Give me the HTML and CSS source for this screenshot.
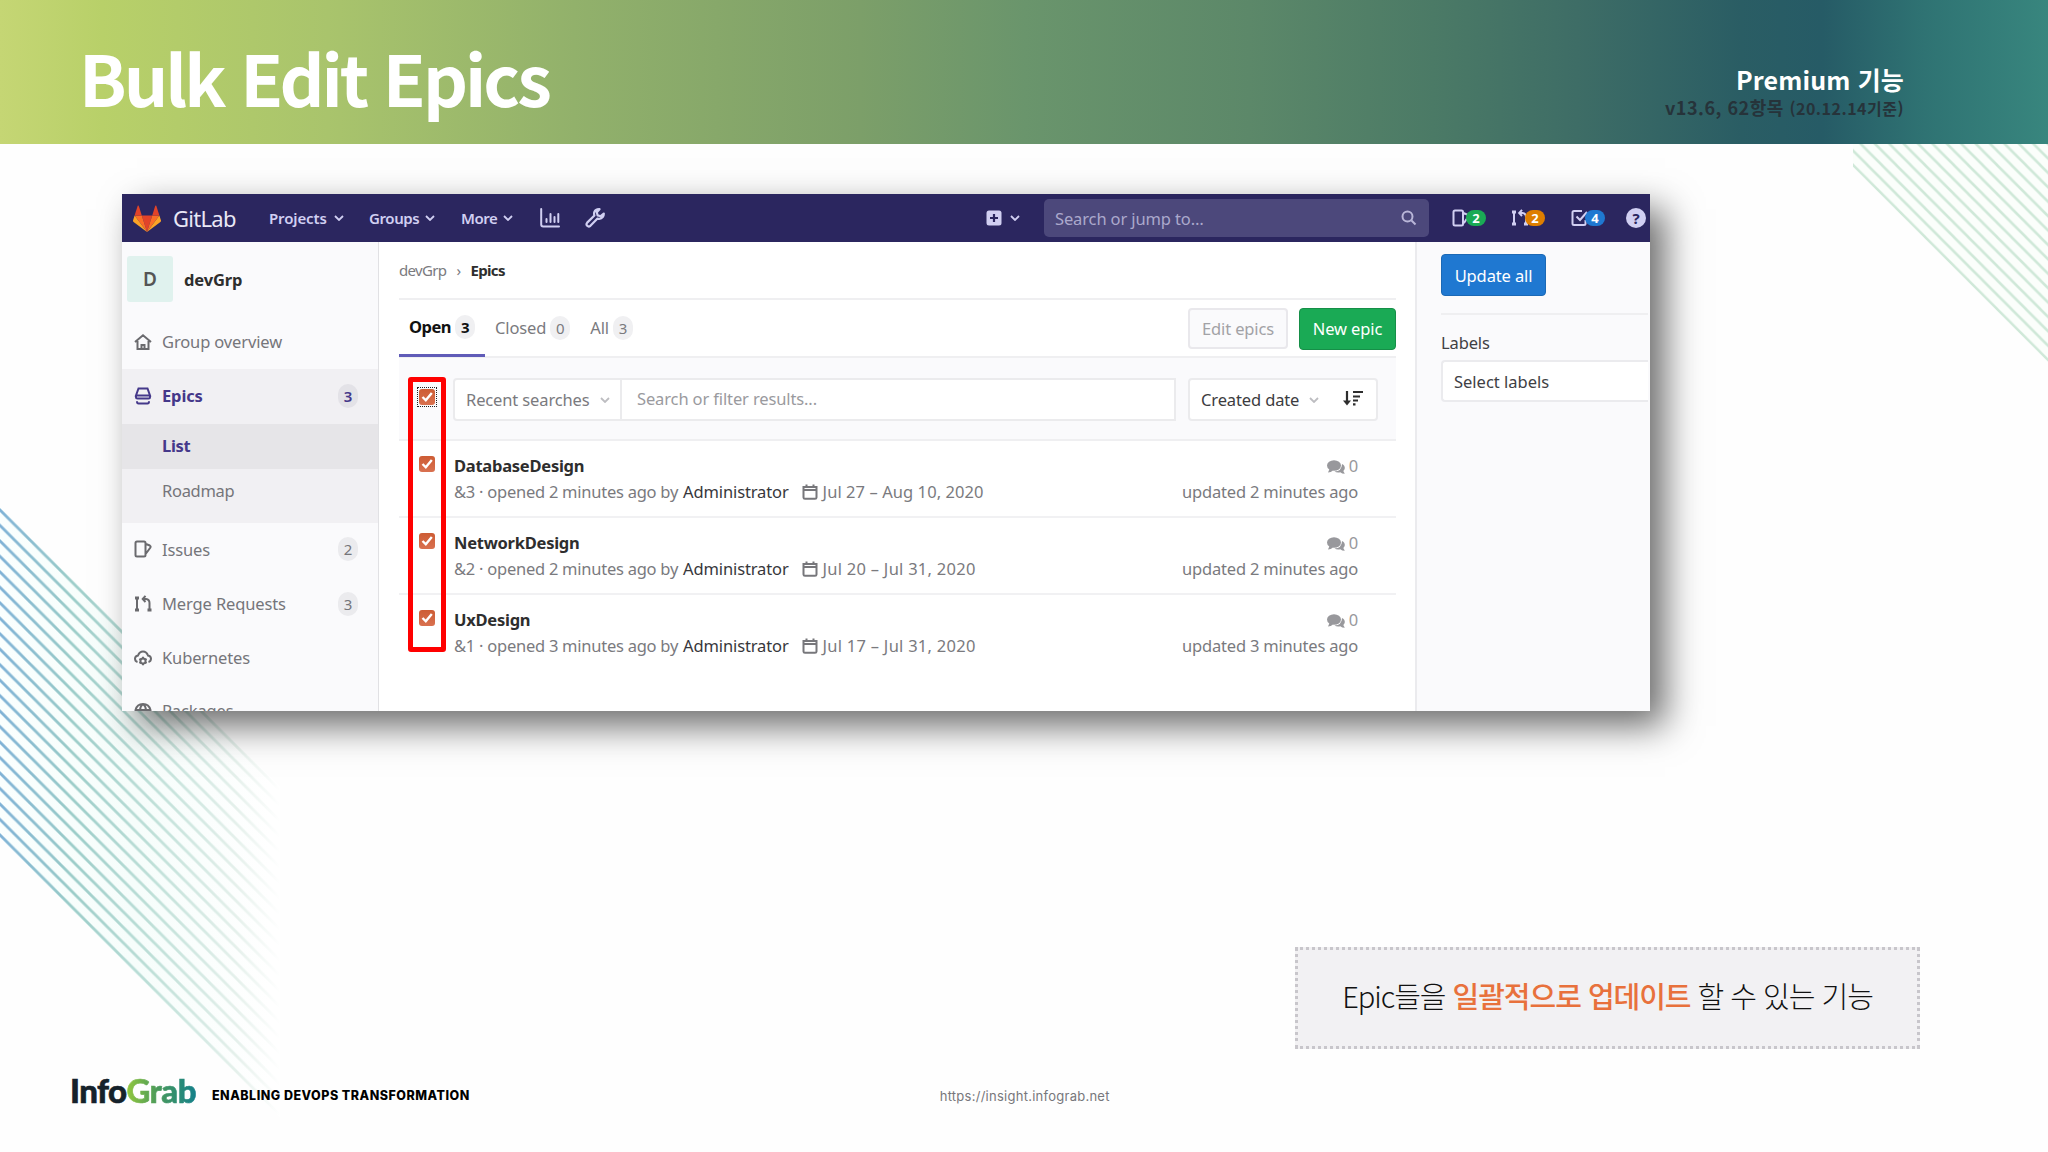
FILE: index.html
```
<!DOCTYPE html>
<html lang="ko">

<head>
  <meta charset="UTF-8" />
  <title>Bulk Edit Epics</title>
  <link rel="stylesheet" href="styles.css">
</head>

<body>
  <div class="slide">
    <!-- decoration lines -->
    <svg class="lines" width="2048" height="1152" viewBox="0 0 2048 1152">
      <defs>
        <linearGradient id="fade" gradientUnits="userSpaceOnUse" x1="0" y1="0" x2="280" y2="0">
          <stop offset="0" stop-color="#7fb2d6" />
          <stop offset="0.25" stop-color="#9accc8" />
          <stop offset="0.55" stop-color="#bfe0d8" />
          <stop offset="0.85" stop-color="#e6f1ec" />
          <stop offset="1" stop-color="#ffffff" />
        </linearGradient>
        <linearGradient id="tint" gradientUnits="userSpaceOnUse" x1="0" y1="0" x2="270" y2="0">
          <stop offset="0" stop-color="#fafffe" />
          <stop offset="0.5" stop-color="#f6fdfb" />
          <stop offset="1" stop-color="#ffffff" />
        </linearGradient>
        <pattern id="leftLines" patternUnits="userSpaceOnUse" width="15.476" height="15.476" patternTransform="translate(0 510)">
          <path d="M-1 -1L16.476 16.476M-1 14.476L1 16.476M14.476 -1L16.476 1" stroke="#fff" stroke-width="2.8" />
        </pattern>
        <mask id="leftMask">
          <path d="M0 507L280 787V1118L0 838Z" fill="url(#leftLines)" />
        </mask>
        <pattern id="rightLines" patternUnits="userSpaceOnUse" width="14.4" height="14.4" patternTransform="translate(1853 165)">
          <path d="M-1 -1L15.4 15.4M-1 13.4L1 15.4M13.4 -1L15.4 1" stroke="#cfe8d8" stroke-width="2.6" />
        </pattern>
      </defs>
      <path d="M0 507L280 787V1118L0 838Z" fill="url(#tint)" />
      <rect x="0" y="500" width="280" height="640" fill="url(#fade)" mask="url(#leftMask)" />
      <path d="M1853 144H2048V362L1853 167Z" fill="#fbfefb" />
      <path d="M1853 144H2048V362L1853 167Z" fill="url(#rightLines)" />
    </svg>

    <header class="header">
      <h1 class="title">Bulk Edit Epics</h1>
      <div class="version">
        <p class="plan">Premium 기능</p>
        <p class="basis">v13.6, 62항목 <small>(20.12.14기준)</small></p>
      </div>
    </header>

    <!-- gitlab window -->
    <div class="window">
      <nav class="nav">
        <svg class="tanuki" viewBox="0 0 28 27" width="28" height="27">
          <path d="M14 27L19.200 10.500H8.800Z" fill="#e24329" />
          <path d="M14 27L8.800 10.500H1.600Z" fill="#fc6d26" />
          <path d="M1.600 10.500L0 15.500Q-.1 16.500 .6 17L14 27Z" fill="#fca326" />
          <path d="M1.600 10.500H8.800L5.700 .8Q5.200 0 4.700 .8Z" fill="#e24329" />
          <path d="M14 27L19.200 10.500H26.400Z" fill="#fc6d26" />
          <path d="M26.400 10.500L28 15.500Q28.100 16.500 27.400 17L14 27Z" fill="#fca326" />
          <path d="M26.400 10.500H19.200L22.300 .8Q22.800 0 23.300 .8Z" fill="#e24329" />
        </svg>
        <span class="brand">GitLab</span>
        <span class="menu projects">Projects</span>
        <svg class="chev" viewBox="0 0 10 6" width="10" height="6"><path d="M1 1L5 5L9 1" /></svg>
        <span class="menu groups">Groups</span>
        <svg class="chev" viewBox="0 0 10 6" width="10" height="6"><path d="M1 1L5 5L9 1" /></svg>
        <span class="menu more">More</span>
        <svg class="chev" viewBox="0 0 10 6" width="10" height="6"><path d="M1 1L5 5L9 1" /></svg>
        <svg class="chart" viewBox="0 0 20 20" width="20" height="20">
          <path d="M1.200 1V16.500Q1.200 18.500 3.200 18.500H19M6.500 14V11M10.500 14V6M14.500 14V9M18.300 14V6" />
        </svg>
        <svg class="wrench" viewBox="0 0 20 20" width="20" height="20">
          <path d="M14.500 1.200Q10.500 1 9.300 4.200Q8.800 5.800 9.400 7.500L2.200 14.600Q.8 16.300 2.200 17.800Q3.700 19.200 5.400 17.800L12.500 10.600Q16 11.500 17.900 8.900Q18.900 7.300 18.800 5.500L15.700 8.200L12.600 7.400L11.800 4.300Z" />
        </svg>
        <svg class="plus" viewBox="0 0 16 16" width="16" height="16">
          <rect x=".5" y=".5" width="15" height="15" rx="2.500" fill="#d1cff2" />
          <path d="M8 4V12M4 8H12" stroke="#2b265f" stroke-width="2.200" />
        </svg>
        <svg class="chev" viewBox="0 0 10 6" width="10" height="6"><path d="M1 1L5 5L9 1" /></svg>
        <div class="search">
          <span>Search or jump to…</span>
          <svg viewBox="0 0 16 16" width="16" height="16"><circle cx="6.500" cy="6.500" r="5" /><path d="M10.500 10.500L14.500 14.500" /></svg>
        </div>
        <div class="counter issues">
          <svg viewBox="0 0 18 18" width="18" height="18"><path d="M3 1.500H9.500Q11 1.500 11 3V15Q11 16.500 9.500 16.500H3Q1.500 16.500 1.500 15V3Q1.500 1.500 3 1.500ZM11.500 4L15.800 5.800Q16.800 6.500 16.300 7.500L12 14" /></svg>
          <b class="green">2</b>
        </div>
        <div class="counter merges">
          <svg viewBox="0 0 18 18" width="18" height="18"><path d="M3 3V15M9 4H11.500Q15 4.500 15 8V15M11 .8L8.200 4L11 7" /><path class="dots" d="M3 1.500V4.500M3 13.500V16.500M15 13.500V16.500" /></svg>
          <b class="orange">2</b>
        </div>
        <div class="counter todos">
          <svg viewBox="0 0 18 18" width="18" height="18"><path d="M11 2H3Q1.500 2 1.500 3.500V14.500Q1.500 16 3 16H13Q14.500 16 14.500 14.500V11M5.500 7.500L9 11L16 3" /></svg>
          <b class="blue">4</b>
        </div>
        <span class="help">?</span>
      </nav>

      <div class="body">
        <aside class="sidebar">
          <div class="group">
            <span class="avatar">D</span>
            <b>devGrp</b>
          </div>
          <div class="item">
            <svg viewBox="0 0 18 18" width="18" height="18"><path d="M1 9L9 2.200L17 9M3.500 8V16H14.500V8M7.500 16V12H10.500V16" /></svg>
            <span>Group overview</span>
          </div>
          <div class="item active">
            <svg viewBox="0 0 18 18" width="18" height="18"><path d="M4.500 1.500H13.500L16 8.500H2ZM2 8.500V10Q2 11.500 3.500 11.500H14.500Q16 11.500 16 10V8.500M3 14.200Q3 16.500 4.500 16.500H13.500Q15 16.500 15 14.200" /></svg>
            <span>Epics</span><i>3</i>
          </div>
          <div class="sub current">List</div>
          <div class="sub last">Roadmap</div>
          <div class="item">
            <svg viewBox="0 0 18 18" width="18" height="18"><path d="M3 1.500H10Q11.500 1.500 11.500 3V15Q11.500 16.500 10 16.500H3Q1.500 16.500 1.500 15V3Q1.500 1.500 3 1.500ZM12 4L15.800 5.500Q17 6.200 16.400 7.500L12 13.500" /></svg>
            <span>Issues</span><i>2</i>
          </div>
          <div class="item">
            <svg viewBox="0 0 18 18" width="18" height="18"><path d="M3 3V15M9.500 4H12Q15.500 4.500 15.500 8V15M11.500 .8L8.700 4L11.500 7" /><path class="dots" d="M3 1.500V4.500M3 13.500V16.500M15.500 13.500V16.500" /></svg>
            <span>Merge Requests</span><i>3</i>
          </div>
          <div class="item">
            <svg viewBox="0 0 18 18" width="18" height="18"><path d="M3.500 13Q1 12.300 1 9.500Q1.200 7 4 6.500Q5.500 2.500 9 2.500T14 6.500Q16.800 7 17 9.500Q17 12.300 14.500 13" /><circle cx="9" cy="12" r="2.600" /><path d="M9 7.800V9.400M9 14.600V16.200M5.400 9.900L6.800 10.700M11.200 13.300L12.600 14.100M12.600 9.900L11.200 10.700M6.800 13.300L5.400 14.100" /></svg>
            <span>Kubernetes</span>
          </div>
          <div class="item packages">
            <svg viewBox="0 0 18 18" width="18" height="18"><path d="M1.500 8Q3 2 9 2T16.500 8V14L9 17L1.500 14ZM1.500 8H16.500M6 8Q6.300 4 9 2M12 8Q11.700 4 9 2" /></svg>
            <span>Packages</span>
          </div>
        </aside>

        <main class="main">
          <div class="crumbs"><span>devGrp</span><em>›</em><b>Epics</b></div>
          <div class="tabs">
            <div class="tab open"><b>Open</b><i>3</i></div>
            <div class="tab"><span>Closed</span><i>0</i></div>
            <div class="tab"><span>All</span><i>3</i></div>
            <div class="btn edit">Edit epics</div>
            <div class="btn new">New epic</div>
          </div>
          <div class="filter">
            <span class="check focused"><svg viewBox="0 0 16 16" width="16" height="16"><path d="M3.500 8L6.800 11.300L12.800 4" /></svg></span>
            <div class="field">
              <div class="recent"><span>Recent searches</span><svg class="chev" viewBox="0 0 10 6" width="10" height="6"><path d="M1 1L5 5L9 1" /></svg></div>
              <span class="hint">Search or filter results...</span>
            </div>
            <div class="sort">
              <span>Created date</span>
              <svg class="chev" viewBox="0 0 10 6" width="10" height="6"><path d="M1 1L5 5L9 1" /></svg>
              <svg class="order" viewBox="0 0 20 16" width="20" height="16"><path d="M4 1V12M10 2H20M10 6.500H17M10 10.500H15M10 14.300H12.500" /><path class="tip" d="M0 10.500H8L4 15.500Z" /></svg>
            </div>
          </div>

          <div class="epic">
            <span class="check"><svg viewBox="0 0 16 16" width="16" height="16"><path d="M3.500 8L6.800 11.300L12.800 4" /></svg></span>
            <div class="info">
              <b>DatabaseDesign</b>
              <p><span class="by">&amp;3 · opened 2 minutes ago by</span><strong>Administrator</strong><svg class="cal" viewBox="0 0 16 16" width="16" height="16"><path d="M1.500 3H14.500V13.500Q14.500 14.800 13 14.800H3Q1.500 14.800 1.500 13.500ZM1.500 6H14.500M4.500 .5V3M11.500 .5V3" /></svg><span class="date">Jul 27 – Aug 10, 2020</span></p>
            </div>
            <div class="meta">
              <p class="talk"><svg viewBox="0 0 18 14" width="18" height="14"><ellipse cx="7" cy="5.500" rx="7" ry="5.300" /><path d="M2.500 9L1 12.500Q4 12.500 6 10.500ZM15 4Q18 5.500 17.800 8.200Q17.600 10 16.300 11L17.800 13.800Q15 13.800 13.300 12.300Q9.500 12.900 7.500 11.500Q14.800 11.300 15 4Z" /></svg>0</p>
              <p>updated 2 minutes ago</p>
            </div>
          </div>
          <div class="epic">
            <span class="check"><svg viewBox="0 0 16 16" width="16" height="16"><path d="M3.500 8L6.800 11.300L12.800 4" /></svg></span>
            <div class="info">
              <b>NetworkDesign</b>
              <p><span class="by">&amp;2 · opened 2 minutes ago by</span><strong>Administrator</strong><svg class="cal" viewBox="0 0 16 16" width="16" height="16"><path d="M1.500 3H14.500V13.500Q14.500 14.800 13 14.800H3Q1.500 14.800 1.500 13.500ZM1.500 6H14.500M4.500 .5V3M11.500 .5V3" /></svg><span class="date short">Jul 20 – Jul 31, 2020</span></p>
            </div>
            <div class="meta">
              <p class="talk"><svg viewBox="0 0 18 14" width="18" height="14"><ellipse cx="7" cy="5.500" rx="7" ry="5.300" /><path d="M2.500 9L1 12.500Q4 12.500 6 10.500ZM15 4Q18 5.500 17.800 8.200Q17.600 10 16.300 11L17.800 13.800Q15 13.800 13.300 12.300Q9.500 12.900 7.500 11.500Q14.800 11.300 15 4Z" /></svg>0</p>
              <p>updated 2 minutes ago</p>
            </div>
          </div>
          <div class="epic">
            <span class="check"><svg viewBox="0 0 16 16" width="16" height="16"><path d="M3.500 8L6.800 11.300L12.800 4" /></svg></span>
            <div class="info">
              <b>UxDesign</b>
              <p><span class="by">&amp;1 · opened 3 minutes ago by</span><strong>Administrator</strong><svg class="cal" viewBox="0 0 16 16" width="16" height="16"><path d="M1.500 3H14.500V13.500Q14.500 14.800 13 14.800H3Q1.500 14.800 1.500 13.500ZM1.500 6H14.500M4.500 .5V3M11.500 .5V3" /></svg><span class="date short">Jul 17 – Jul 31, 2020</span></p>
            </div>
            <div class="meta">
              <p class="talk"><svg viewBox="0 0 18 14" width="18" height="14"><ellipse cx="7" cy="5.500" rx="7" ry="5.300" /><path d="M2.500 9L1 12.500Q4 12.500 6 10.500ZM15 4Q18 5.500 17.800 8.200Q17.600 10 16.300 11L17.800 13.800Q15 13.800 13.300 12.300Q9.500 12.900 7.500 11.500Q14.800 11.300 15 4Z" /></svg>0</p>
              <p>updated 3 minutes ago</p>
            </div>
          </div>
        </main>

        <aside class="bulk">
          <div class="btn update">Update all</div>
          <div class="labels">Labels</div>
          <div class="select">Select labels</div>
        </aside>
      </div>
      <!-- red mark over the checkboxes -->
      <div class="mark"></div>
    </div>

    <div class="note"><p>Epic들을 <b>일괄적으로 업데이트</b> 할 수 있는 기능</p></div>

    <footer class="footer">
      <span class="logo">Info<b>Grab</b></span>
      <span class="slogan">ENABLING DEVOPS TRANSFORMATION</span>
      <span class="url">https://insight.infograb.net</span>
    </footer>
  </div>
</body>

</html>
```

FILE: styles.css
```
* {
  margin: 0;
  padding: 0;
  box-sizing: border-box;
}

body {
  background: #fff;
  font-family: "Noto Sans", "Noto Sans CJK KR", sans-serif;
}

i, em {
  font-style: normal;
}

.slide {
  position: relative;
  width: 2048px;
  height: 1152px;
  overflow: hidden;
  background: #fefefe;
  display: flex;
  flex-direction: column;
}

.lines {
  position: absolute;
  left: 0;
  top: 0;
}

.header {
  position: relative;
  height: 144px;
  padding: 0 144px 0 79px;
  display: flex;
  justify-content: space-between;
  background: linear-gradient(90deg, #c5d674 0%, #b8d069 5%, #a9c46c 16%, #92b16b 28%, #7c9f69 42%, #6a956c 50%, #5c8869 61%, #4b7a66 70%, #3e6d66 77%, #2a5d64 85%, #265b66 89%, #2f7373 94%, #38867e 100%);
  font-family: "Noto Sans CJK KR", sans-serif;
}

.title {
  padding-top: 25px;
  font-size: 70px;
  line-height: 104px;
  letter-spacing: -3px;
  color: #fff;
  white-space: nowrap;
}

.version {
  padding-top: 61px;
  text-align: right;
  font-weight: bold;
}

.plan {
  font-size: 25px;
  line-height: 36px;
  letter-spacing: 0.150px;
  color: #fff;
}

.basis {
  font-size: 18px;
  line-height: 20px;
  letter-spacing: 0.500px;
  color: #26333a;
}

.basis small {
  font-size: 16px;
}

.window {
  position: relative;
  width: 1528px;
  height: 517px;
  margin: 50px 0 0 122px;
  display: flex;
  flex-direction: column;
  background: #fff;
  box-shadow: 15px 15px 34px rgba(0, 0, 0, 0.58);
  font-size: 16.500px;
  letter-spacing: -0.130px;
}

.nav {
  height: 48px;
  flex: none;
  padding-left: 11px;
  display: flex;
  align-items: center;
  background: #2b265f;
  color: #d1cff2;
  white-space: nowrap;
}

.chev {
  fill: none;
  stroke: #d1cff2;
  stroke-width: 1.800;
  flex: none;
}

.brand {
  width: 62px;
  margin-left: 12px;
  font-size: 22px;
  letter-spacing: -0.700px;
  color: #e9e8f6;
}

.menu {
  margin-right: 7px;
  font-size: 15px;
  font-weight: 600;
}

.projects {
  width: 58px;
  margin-left: 34px;
}

.groups {
  width: 49px;
  margin-left: 25px;
  letter-spacing: -0.400px;
}

.more {
  width: 35px;
  margin-left: 26px;
  letter-spacing: -0.500px;
}

.chart {
  margin-left: 27px;
  fill: none;
  stroke: #d1cff2;
  stroke-width: 2;
  stroke-linecap: round;
}

.wrench {
  margin-left: 25px;
  fill: none;
  stroke: #d1cff2;
  stroke-width: 2.200;
  stroke-linejoin: round;
}

.plus {
  margin-left: 381px;
  margin-right: 8px;
}

.search {
  width: 385px;
  height: 38px;
  margin-left: 24px;
  padding: 0 12px 0 11px;
  display: flex;
  justify-content: space-between;
  align-items: center;
  border-radius: 5px;
  background: #4c487b;
  color: #aba8cc;
}

.search svg {
  fill: none;
  stroke: #b9b6d8;
  stroke-width: 2;
}

.counter {
  display: flex;
  align-items: center;
}

.counter svg {
  fill: none;
  stroke: #d1cff2;
  stroke-width: 2;
}

.counter .dots {
  stroke-width: 4;
}

.counter b {
  width: 20px;
  height: 16px;
  margin-left: -4px;
  border-radius: 8px;
  font-size: 13px;
  line-height: 16px;
  text-align: center;
  color: #fff;
  position: relative;
}

.issues {
  margin-left: 23px;
}

.merges {
  margin-left: 25px;
}

.todos {
  margin-left: 26px;
}

.green {
  background: #1aaa55;
}

.orange {
  background: #de7e00;
}

.blue {
  background: #1f78d1;
}

.help {
  width: 20px;
  height: 20px;
  margin-left: 21px;
  border-radius: 50%;
  background: #d1cff2;
  color: #2b265f;
  font-size: 15px;
  font-weight: bold;
  line-height: 20px;
  text-align: center;
}

.body {
  flex: 1;
  min-height: 0;
  display: flex;
  overflow: hidden;
}

.sidebar {
  width: 257px;
  flex: none;
  border-right: 1px solid #e1e1e4;
  background: #fafafc;
  color: #75757a;
}

.group {
  height: 73px;
  padding: 14px 0 13px 5px;
  display: flex;
  align-items: center;
  color: #2e2e2e;
}

.avatar {
  width: 46px;
  height: 46px;
  margin-right: 11px;
  border-radius: 3px;
  background: #e0f2ee;
  color: #555;
  font-size: 19px;
  font-weight: 600;
  line-height: 46px;
  text-align: center;
}

.item {
  height: 54.300px;
  padding: 0 20px 1px 12px;
  display: flex;
  align-items: center;
}

.item svg {
  margin-right: 10px;
  flex: none;
  fill: none;
  stroke: #6a6a6e;
  stroke-width: 2;
}

.item .dots {
  stroke-width: 4;
}

.item i {
  width: 20px;
  height: 24px;
  margin-left: auto;
  border-radius: 10px;
  background: #ebebee;
  font-size: 15px;
  line-height: 24px;
  text-align: center;
}

.active {
  background: #f1f0f3;
  color: #45388a;
  font-weight: bold;
}

.item.active svg {
  stroke: #45388a;
}

.item.active i {
  background: #e3e2e7;
  font-weight: 600;
}

.item.packages {
  padding-bottom: 4px;
}

.sub {
  height: 45px;
  padding-left: 40px;
  line-height: 43px;
  letter-spacing: -0.300px;
  background: #f1f0f3;
}

.current {
  background: #e6e5e8;
  color: #45388a;
  font-weight: bold;
}

.last {
  height: 54px;
}

.main {
  width: 1036px;
  flex: none;
  padding: 0 19px 0 20px;
  background: #fff;
  color: #7a7a7e;
}

.crumbs {
  height: 58px;
  display: flex;
  align-items: center;
  border-bottom: 2px solid #efeff1;
  font-size: 15px;
  letter-spacing: -0.650px;
}

.crumbs em {
  width: 24px;
  text-align: center;
}

.crumbs b {
  color: #2e2e2e;
}

.tabs {
  height: 58px;
  display: flex;
  align-items: center;
  border-bottom: 2px solid #efeff1;
}

.tab {
  height: 58px;
  padding-bottom: 1px;
  display: flex;
  align-items: center;
  margin-right: 20px;
}

.tab i {
  width: 20px;
  height: 24px;
  margin-left: 4px;
  border-radius: 10px;
  background: #f0f0f2;
  font-size: 15px;
  line-height: 24px;
  text-align: center;
}

.tab.open {
  width: 86px;
  margin-right: 10px;
  padding: 0 0 0 10px;
  border-bottom: 3px solid #605cb8;
  color: #111;
  letter-spacing: -0.500px;
}

.tab.open i {
  font-weight: bold;
}

.btn {
  display: flex;
  align-items: center;
  justify-content: center;
  border-radius: 4px;
  white-space: nowrap;
}

.edit {
  width: 100px;
  height: 41px;
  margin: 1px 0 0 auto;
  border: 2px solid #e9e8ec;
  background: #fafafc;
  color: #a2a2a6;
}

.new {
  width: 97px;
  height: 42px;
  margin: 1px 0 0 11px;
  border: 1px solid #168f48;
  background: #1aaa55;
  color: #fff;
}

.filter {
  height: 83px;
  padding: 20px 0 0 18px;
  display: flex;
  border-bottom: 2px solid #efeff1;
  background: #fafafc;
}

.check {
  width: 20px;
  height: 20px;
  padding: 2px;
  flex: none;
}

.check svg {
  display: block;
  border-radius: 3px;
  background: linear-gradient(#cd5c34, #d97150);
  fill: none;
  stroke: #fff;
  stroke-width: 2.400;
}

.focused {
  margin-top: 9px;
  padding: 1px;
  border: 1px dotted #222;
}

.field {
  width: 723px;
  height: 43px;
  margin-left: 16px;
  display: flex;
  align-items: center;
  border: 2px solid #ebebed;
  border-radius: 4px 0 0 4px;
  background: #fff;
}

.recent {
  width: 167px;
  height: 39px;
  padding-left: 11px;
  display: flex;
  align-items: center;
  border-right: 2px solid #ebebed;
}

.field .chev,
.sort .chev {
  margin-left: 10px;
  stroke: #bdbdc1;
}

.hint {
  margin-left: 15px;
  padding-bottom: 2px;
  color: #9a9a9e;
}

.sort {
  width: 190px;
  height: 43px;
  margin-left: 12px;
  padding-left: 11px;
  display: flex;
  align-items: center;
  border: 2px solid #ebebed;
  border-radius: 4px;
  background: #fff;
  color: #3c3c40;
}

.order {
  margin: 0 0 3px 24px;
  fill: none;
  stroke: #2e2e2e;
  stroke-width: 2.200;
}

.order .tip {
  fill: #2e2e2e;
  stroke: none;
}

.epic {
  height: 77.200px;
  padding: 12px 38px 0 18px;
  display: flex;
  border-bottom: 2px solid #f1f1f3;
}

.epic:last-child {
  border-bottom: none;
}

.epic .check {
  margin-top: 1px;
}

.info {
  margin-left: 17px;
}

.info b {
  display: inline-block;
  line-height: 26px;
  letter-spacing: -0.250px;
  color: #2e2e2e;
}

.info p {
  display: flex;
  align-items: center;
  line-height: 26px;
  white-space: nowrap;
}

.by {
  letter-spacing: -0.250px;
}

.info strong {
  margin: 0 13px 0 5px;
  font-weight: normal;
  color: #37373b;
}

.cal {
  margin-right: 5px;
  fill: none;
  stroke: #77777b;
  stroke-width: 2;
}

.date {
  letter-spacing: 0.070px;
}

.short {
  letter-spacing: 0.260px;
}

.meta {
  margin-left: auto;
  text-align: right;
  line-height: 26px;
  letter-spacing: -0.200px;
}

.talk {
  color: #98989c;
}

.talk svg {
  margin-right: 4px;
  vertical-align: -2px;
  fill: #98989c;
}

.bulk {
  flex: 1;
  padding: 12px 2px 0 24px;
  border-left: 2px solid #ebebee;
  background: #fafafc;
  color: #404044;
}

.update {
  width: 105px;
  height: 42px;
  border: 1px solid #1b69b6;
  background: #1f78d1;
  color: #fff;
}

.labels {
  height: 47px;
  margin-top: 17px;
  padding-top: 15px;
  border-top: 2px solid #efeff1;
  line-height: 26px;
}

.select {
  height: 42px;
  padding-left: 11px;
  border: 2px solid #ebebee;
  border-right: none;
  border-radius: 4px 0 0 4px;
  background: #fff;
  line-height: 39px;
  letter-spacing: 0;
}

.mark {
  position: absolute;
  left: 286px;
  top: 183px;
  width: 38px;
  height: 275px;
  border: 5px solid #f00;
  border-radius: 3px;
}

.note {
  position: relative;
  width: 625px;
  height: 102px;
  margin: 236px 0 0 1295px;
  padding-bottom: 7px;
  display: flex;
  align-items: center;
  justify-content: center;
  border: 3px dotted #c8c6cb;
  background: #f2f1f3;
  color: #111;
  font-family: "Noto Sans CJK KR", sans-serif;
  font-size: 29px;
  font-weight: 300;
  letter-spacing: -1.030px;
  white-space: nowrap;
}

.note b {
  font-weight: 500;
  color: #e8713c;
}

.footer {
  position: relative;
  margin-top: 23px;
  padding-left: 70px;
  display: flex;
  align-items: flex-start;
  line-height: 36px;
  white-space: nowrap;
}

.logo {
  font-family: Lato, sans-serif;
  font-size: 33px;
  font-weight: 900;
  letter-spacing: -0.530px;
  color: #15222b;
  -webkit-text-stroke: 0.600px #15222b;
}

.logo b {
  font-weight: 900;
  background: linear-gradient(90deg, #93c83e, #4a9a5a 45%, #14808a);
  -webkit-background-clip: text;
  background-clip: text;
  color: transparent;
  -webkit-text-stroke: 0.600px transparent;
}

.slogan {
  margin: 6px 0 0 16px;
  font-family: Inter, sans-serif;
  font-size: 12.500px;
  font-weight: 800;
  letter-spacing: 0.490px;
  color: #000;
}

.url {
  margin: 6px 0 0 470px;
  font-family: Inter, sans-serif;
  font-size: 13px;
  letter-spacing: 0.260px;
  color: #77777b;
}
```
